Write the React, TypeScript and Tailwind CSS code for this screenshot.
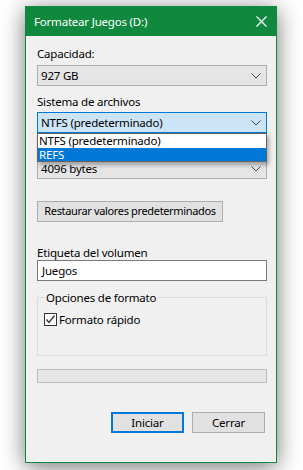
import React from 'react';

const font = { fontFamily: '"Segoe UI", "Noto Sans", "Liberation Sans", sans-serif' };

const Chevron: React.FC = () => (
  <svg width="10" height="6" viewBox="0 0 10 6" className="shrink-0">
    <polyline points="0.5,0.5 5,5 9.5,0.5" fill="none" stroke="#444" strokeWidth="1" />
  </svg>
);

const Select: React.FC<{ value: string; focused?: boolean }> = ({ value, focused }) => (
  <div
    className={
      focused
        ? 'h-[21px] flex items-center justify-between pl-[3px] pr-[5px] border border-[#0078d7] bg-[#cce4f7]'
        : 'h-[21px] flex items-center justify-between pl-[3px] pr-[5px] border border-[#adadad] bg-[#e5e5e5]'
    }
  >
    <span className="leading-[15px]">{value}</span>
    <Chevron />
  </div>
);

export default function App() {
  return (
    <div
      className="w-[303px] h-[470px] bg-white pt-[6px] pl-[25px] overflow-hidden text-[11.5px] tracking-[-0.2px] text-black"
      style={font}
    >
      <div className="w-[252px] h-[457px] border border-[#10893e] bg-[#f0f0f0] flex flex-col shadow-[0_4px_22px_rgba(0,0,0,0.55)]">
        {/* title bar */}
        <div className="h-[29px] bg-[#10893e] flex items-center justify-between pl-[8px] pr-[9px] text-white">
          <span className="leading-[15px]">Formatear Juegos (D:)</span>
          <svg width="11" height="11" viewBox="0 0 11 11">
            <path d="M0.5 0.5 L10.5 10.5 M10.5 0.5 L0.5 10.5" stroke="#fff" strokeWidth="1.2" />
          </svg>
        </div>

        <div className="flex flex-col pl-[11px] pr-[9px]">
          <div className="mt-[10px] leading-[15px]">Capacidad:</div>
          <div className="mt-[4px]">
            <Select value="927 GB" />
          </div>

          <div className="mt-[8px] leading-[15px]">Sistema de archivos</div>
          <div className="mt-[3px] relative">
            <Select value="NTFS (predeterminado)" focused />
            {/* open list, covers the allocation-size label */}
            <div className="absolute left-0 right-0 top-[21px] z-10 border border-[#646464] bg-white shadow-[2px_3px_4px_rgba(0,0,0,0.3)]">
              <div className="h-[14px] leading-[14px] pl-[1px]">NTFS (predeterminado)</div>
              <div className="h-[13px] leading-[13px] pl-[1px] bg-[#0078d7] text-white">REFS</div>
            </div>
          </div>

          <div className="mt-[7px] h-[15px]" />
          <div className="mt-[3px]">
            <Select value="4096 bytes" />
          </div>

          <div className="mt-[22px] w-[186px] h-[21px] flex items-center justify-center whitespace-nowrap text-[11px] tracking-[-0.35px] border border-[#adadad] bg-[#e1e1e1]">
            Restaurar valores predeterminados
          </div>

          <div className="mt-[23px] leading-[15px]">Etiqueta del volumen</div>
          <div className="h-[21px] flex items-center pl-[4px] border border-[#7a7a7a] bg-white">Juegos</div>

          <fieldset className="mt-[9px] h-[66px] border border-[#dcdcdc] px-[6px]">
            <legend className="px-[2px] leading-[15px]">Opciones de formato</legend>
            <div className="mt-[7px] flex items-center gap-[2px]">
              <div className="w-[13px] h-[13px] border border-[#333] bg-white flex items-center justify-center">
                <svg width="11" height="11" viewBox="0 0 11 11">
                  <polyline points="1.5,5.5 4,8.5 9.5,1.5" fill="none" stroke="#333" strokeWidth="1.3" />
                </svg>
              </div>
              <span className="leading-[15px]">Formato rápido</span>
            </div>
          </fieldset>

          <div className="mt-[13px] h-[14px] border border-[#bcbcbc] bg-[#e6e6e6]" />

          <div className="mt-[29px] flex justify-end gap-[8px] pr-[2px]">
            <div className="w-[73px] h-[21px] flex items-center justify-center border-2 border-[#0078d7] bg-[#e1e1e1]">
              Iniciar
            </div>
            <div className="w-[73px] h-[21px] flex items-center justify-center border border-[#adadad] bg-[#e1e1e1]">
              Cerrar
            </div>
          </div>
        </div>
      </div>
    </div>
  );
}
